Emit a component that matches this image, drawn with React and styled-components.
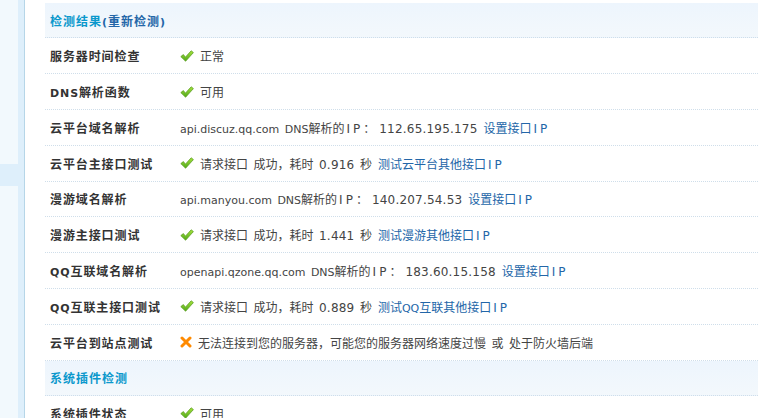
import React from "react"
import styled, { createGlobalStyle } from "styled-components"

const GlobalStyle = createGlobalStyle`
  html, body {
    margin: 0;
    padding: 0;
    background: #fff;
  }
  body {
    font: 12px "Noto Sans CJK SC", "Liberation Sans", sans-serif;
    color: #333;
  }
`

const checks = [
  { label: "服务器时间检查", ok: true, text: "正常" },
  { label: "DNS解析函数", ok: true, text: "可用" },
  {
    label: "云平台域名解析",
    text: "api.discuz.qq.com DNS解析的IP：112.65.195.175",
    link: "设置接口IP",
  },
  {
    label: "云平台主接口测试",
    ok: true,
    text: "请求接口 成功，耗时 0.916 秒",
    link: "测试云平台其他接口IP",
  },
  {
    label: "漫游域名解析",
    text: "api.manyou.com DNS解析的IP：140.207.54.53",
    link: "设置接口IP",
  },
  {
    label: "漫游主接口测试",
    ok: true,
    text: "请求接口 成功，耗时 1.441 秒",
    link: "测试漫游其他接口IP",
  },
  {
    label: "QQ互联域名解析",
    text: "openapi.qzone.qq.com DNS解析的IP：183.60.15.158",
    link: "设置接口IP",
  },
  {
    label: "QQ互联主接口测试",
    ok: true,
    text: "请求接口 成功，耗时 0.889 秒",
    link: "测试QQ互联其他接口IP",
  },
  {
    label: "云平台到站点测试",
    ok: false,
    text: "无法连接到您的服务器，可能您的服务器网络速度过慢 或 处于防火墙后端",
  },
]

const plugins = [{ label: "系统插件状态", ok: true, text: "可用" }]

// split text into runs: "IP", numbers, other latin, the full width colon, cjk
function Mixed({ children }) {
  return children
    .split(/(IP|\d[\d.]*\d|\d|[\x20-\x2F\x3A-\x7E]+|：)/)
    .filter(Boolean)
    .map((part, i) => {
      if (part === "IP") return <Wide key={i}>{part}</Wide>
      if (/^\d/.test(part)) return <Num key={i}>{part}</Num>
      if (part === "：") return <Colon key={i}>{part}</Colon>
      if (/[\x20-\x7E]/.test(part)) return <Latin key={i}>{part}</Latin>
      return part
    })
}

function CheckIcon() {
  return (
    <svg width="14" height="12" viewBox="0 0 14 12">
      <defs>
        <linearGradient id="ok" x1="0" y1="0" x2="0" y2="1">
          <stop offset="0" stopColor="#a6e33d" />
          <stop offset="1" stopColor="#4fa817" />
        </linearGradient>
      </defs>
      <path
        d="M0.8 6.6 L3.4 4.6 L5.4 7.2 L11.2 0.8 L13.4 2.6 L5.6 11.2 Z"
        fill="url(#ok)"
        stroke="#5d9e24"
        strokeWidth="0.8"
        strokeLinejoin="round"
      />
    </svg>
  )
}

function CrossIcon() {
  return (
    <svg width="12" height="12" viewBox="0 0 12 12">
      <path
        d="M2 2 L10 10 M10 2 L2 10"
        stroke="#ff8a00"
        strokeWidth="3"
        strokeLinecap="round"
      />
    </svg>
  )
}

export default function App() {
  const renderRow = (item) => (
    <Row key={item.label}>
      <Label>
        <Mixed>{item.label}</Mixed>
      </Label>
      <Value>
        {item.ok === true && <CheckIcon />}
        {item.ok === false && <CrossIcon />}
        <span>
          <Mixed>{item.text}</Mixed>
        </span>
        {item.link && (
          <Link href="#">
            <Mixed>{item.link}</Mixed>
          </Link>
        )}
      </Value>
    </Row>
  )

  return (
    <Page>
      <GlobalStyle />
      <Sidebar>
        <Menu>
          <MenuItem />
          <MenuItem $active />
          <MenuItem $grow />
        </Menu>
      </Sidebar>

      <Main>
        <SectionHead>
          <Title>检测结果</Title>
          <Link href="#" $bold>
            <Mixed>(重新检测)</Mixed>
          </Link>
        </SectionHead>
        {checks.map(renderRow)}

        <SectionHead>
          <Title>系统插件检测</Title>
        </SectionHead>
        {plugins.map(renderRow)}
      </Main>
    </Page>
  )
}

const Page = styled.div`
  display: flex;
  height: 418px;
  overflow: hidden;
`

const Sidebar = styled.div`
  width: 24px;
  flex-shrink: 0;
  background: #deeffb;
  border-right: 1px solid #b6d6e8;
  display: flex;
`

const Menu = styled.div`
  width: 18px;
  display: flex;
  flex-direction: column;
`

const MenuItem = styled.div`
  height: ${(p) => (p.$active ? "22px" : "164px")};
  flex-grow: ${(p) => (p.$grow ? 1 : 0)};
  background: ${(p) => (p.$active ? "#deeffb" : "#f2f9fd")};
`

const Main = styled.div`
  flex: 1;
  padding: 3px 0 0 20px;
`

const Latin = styled.span`
  font-family: "DejaVu Sans", Verdana, sans-serif;
  font-size: 11px;
  word-spacing: 2px;
`

const Num = styled.span`
  font-family: "DejaVu Sans", Verdana, sans-serif;
  font-size: 12px;
  letter-spacing: 0.2px;
`

const Wide = styled.span`
  font-family: "DejaVu Sans", Verdana, sans-serif;
  font-size: 12px;
  letter-spacing: 3px;
  margin-left: 2px;
`

const Colon = styled.span`
  padding-right: 4px;
`

const Row = styled.div`
  display: flex;
  align-items: center;
  height: 35.8px;
  box-sizing: border-box;
  border-bottom: 1px dotted #cfdeea;
  white-space: pre;
`

const SectionHead = styled(Row)`
  height: 35.4px;
  padding-left: 5px;
  background: linear-gradient(#edf5fd, #f3f8fc);
  font-weight: bold;
  letter-spacing: 1px;
`

const Title = styled.span`
  color: #0a98cc;
`

const Label = styled.div`
  width: 125px;
  padding-left: 5px;
  font-weight: bold;
  letter-spacing: 0.9px;
  color: #333;
`

const Value = styled.div`
  display: flex;
  align-items: center;
  gap: 6px;
  padding-left: 5px;
  color: #444;
`

const Link = styled.a`
  color: #2366a8;
  text-decoration: none;
  font-weight: ${(p) => (p.$bold ? "bold" : "normal")};
`
